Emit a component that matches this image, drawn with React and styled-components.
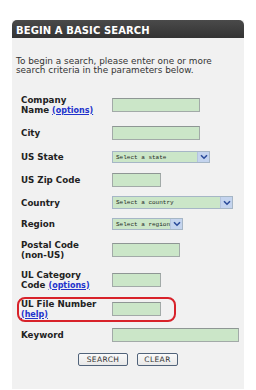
import React from "react";
import styled, { createGlobalStyle } from "styled-components";

const Global = createGlobalStyle`
  html, body { margin: 0; padding: 0; background: #ffffff; }
  body { font-family: "DejaVu Sans", Verdana, sans-serif; }
`;

const Panel = styled.section`
  margin: 20px 0 0 12px;
  width: 232px;
  height: 369px;
  background: #f1f1f1;
  display: flex;
  flex-direction: column;
`;

const Header = styled.h2`
  margin: 0;
  height: 18px;
  box-sizing: border-box;
  padding: 5px 0 1px 4px;
  background: linear-gradient(#4a4a4a, #333333);
  border-radius: 5px 5px 0 0;
  color: #ffffff;
  font: bold 10px/12px "DejaVu Sans", Verdana, sans-serif;
  letter-spacing: 0.1px;
`;

const Intro = styled.p`
  margin: 0;
  width: 218px;
  padding: 19px 0 0 4px;
  font-size: 8.9px;
  line-height: 9.2px;
  color: #333333;
  height: 33px;
`;

const Form = styled.form`
  display: flex;
  flex-direction: column;
  padding: 0 0 0 9px;
`;

const Row = styled.div`
  position: relative;
  display: grid;
  grid-template-columns: 91px 1fr;
  align-items: center;
  height: ${(p) => p.$h}px;
`;

const Label = styled.label`
  font: bold 8.7px/10px "DejaVu Sans", Verdana, sans-serif;
  color: #222222;
`;

const Link = styled.a`
  color: #2233cc;
  text-decoration: underline;
  font-size: 8px;
`;

const Input = styled.input`
  box-sizing: border-box;
  width: ${(p) => p.$w}px;
  height: 14px;
  margin: 0;
  padding: 0;
  background: #cbe6c8;
  border: 1px solid #a2aaa8;
  border-top-color: #8e9694;
`;

const Select = styled.div`
  box-sizing: border-box;
  width: ${(p) => p.$w}px;
  height: ${(p) => p.$h}px;
  display: flex;
  align-items: stretch;
  background: #cbe6c8;
  border: 1px solid #a6b6c6;
`;

const SelectText = styled.span`
  flex: 1;
  display: flex;
  align-items: center;
  padding-left: 3px;
  font: 6px "Liberation Mono", monospace;
  color: #1f2a1f;
  white-space: nowrap;
  overflow: hidden;
`;

const Arrow = styled.span`
  width: 11px;
  display: flex;
  align-items: center;
  justify-content: center;
  background: #c4d4ee;
  border-left: 1px solid #b4c4de;
`;

const Highlight = styled.div`
  position: absolute;
  left: -4px;
  top: 2px;
  width: 159px;
  height: 25px;
  box-sizing: border-box;
  border: 2px solid #d8222a;
  border-radius: 8px;
  pointer-events: none;
`;

const Buttons = styled.div`
  display: flex;
  justify-content: center;
  gap: 9px;
  margin-top: 6px;
  padding-right: 9px;
`;

const Button = styled.button`
  box-sizing: border-box;
  width: ${(p) => p.$w}px;
  height: 13px;
  margin: 0;
  padding: 0;
  background: linear-gradient(#fafafa, #e8e8e8);
  border: 1px solid #51637a;
  border-radius: 2px;
  font: 7.5px/11px "DejaVu Sans", Verdana, sans-serif;
  letter-spacing: 0.4px;
  color: #333333;
`;

const Chevron = () => (
  <svg width="8" height="6" viewBox="0 0 8 6">
    <path d="M1 1.2 L4 4.2 L7 1.2" fill="none" stroke="#2b4b9b" strokeWidth="1.6" />
  </svg>
);

const Dropdown = ({ w, h, text }) => (
  <Select $w={w} $h={h}>
    <SelectText>{text}</SelectText>
    <Arrow>
      <Chevron />
    </Arrow>
  </Select>
);

export default function App() {
  return (
    <>
      <Global />
      <Panel>
        <Header>BEGIN A BASIC SEARCH</Header>
        <Intro>
          To begin a search, please enter one or more search criteria in the parameters below.
        </Intro>
        <Form>
          <Row $h={30}>
            <Label>
              Company
              <br />
              Name <Link>(options)</Link>
            </Label>
            <Input $w={88} />
          </Row>
          <Row $h={26}>
            <Label>City</Label>
            <Input $w={88} />
          </Row>
          <Row $h={22}>
            <Label>US State</Label>
            <Dropdown w={98} h={12} text="Select a state" />
          </Row>
          <Row $h={24}>
            <Label>US Zip Code</Label>
            <Input $w={49} />
          </Row>
          <Row $h={21}>
            <Label>Country</Label>
            <Dropdown w={121} h={13} text="Select a country" />
          </Row>
          <Row $h={22}>
            <Label>Region</Label>
            <Dropdown w={71} h={12} text="Select a region" />
          </Row>
          <Row $h={30}>
            <Label>
              Postal Code
              <br />
              (non-US)
            </Label>
            <Input $w={68} />
          </Row>
          <Row $h={30}>
            <Label>
              UL Category
              <br />
              Code <Link>(options)</Link>
            </Label>
            <Input $w={49} />
          </Row>
          <Row $h={28}>
            <Highlight />
            <Label>
              UL File Number
              <br />
              <Link>(help)</Link>
            </Label>
            <Input $w={49} />
          </Row>
          <Row $h={24}>
            <Label>Keyword</Label>
            <Input $w={127} />
          </Row>
          <Buttons>
            <Button type="button" $w={50}>SEARCH</Button>
            <Button type="button" $w={41}>CLEAR</Button>
          </Buttons>
        </Form>
      </Panel>
    </>
  );
}
